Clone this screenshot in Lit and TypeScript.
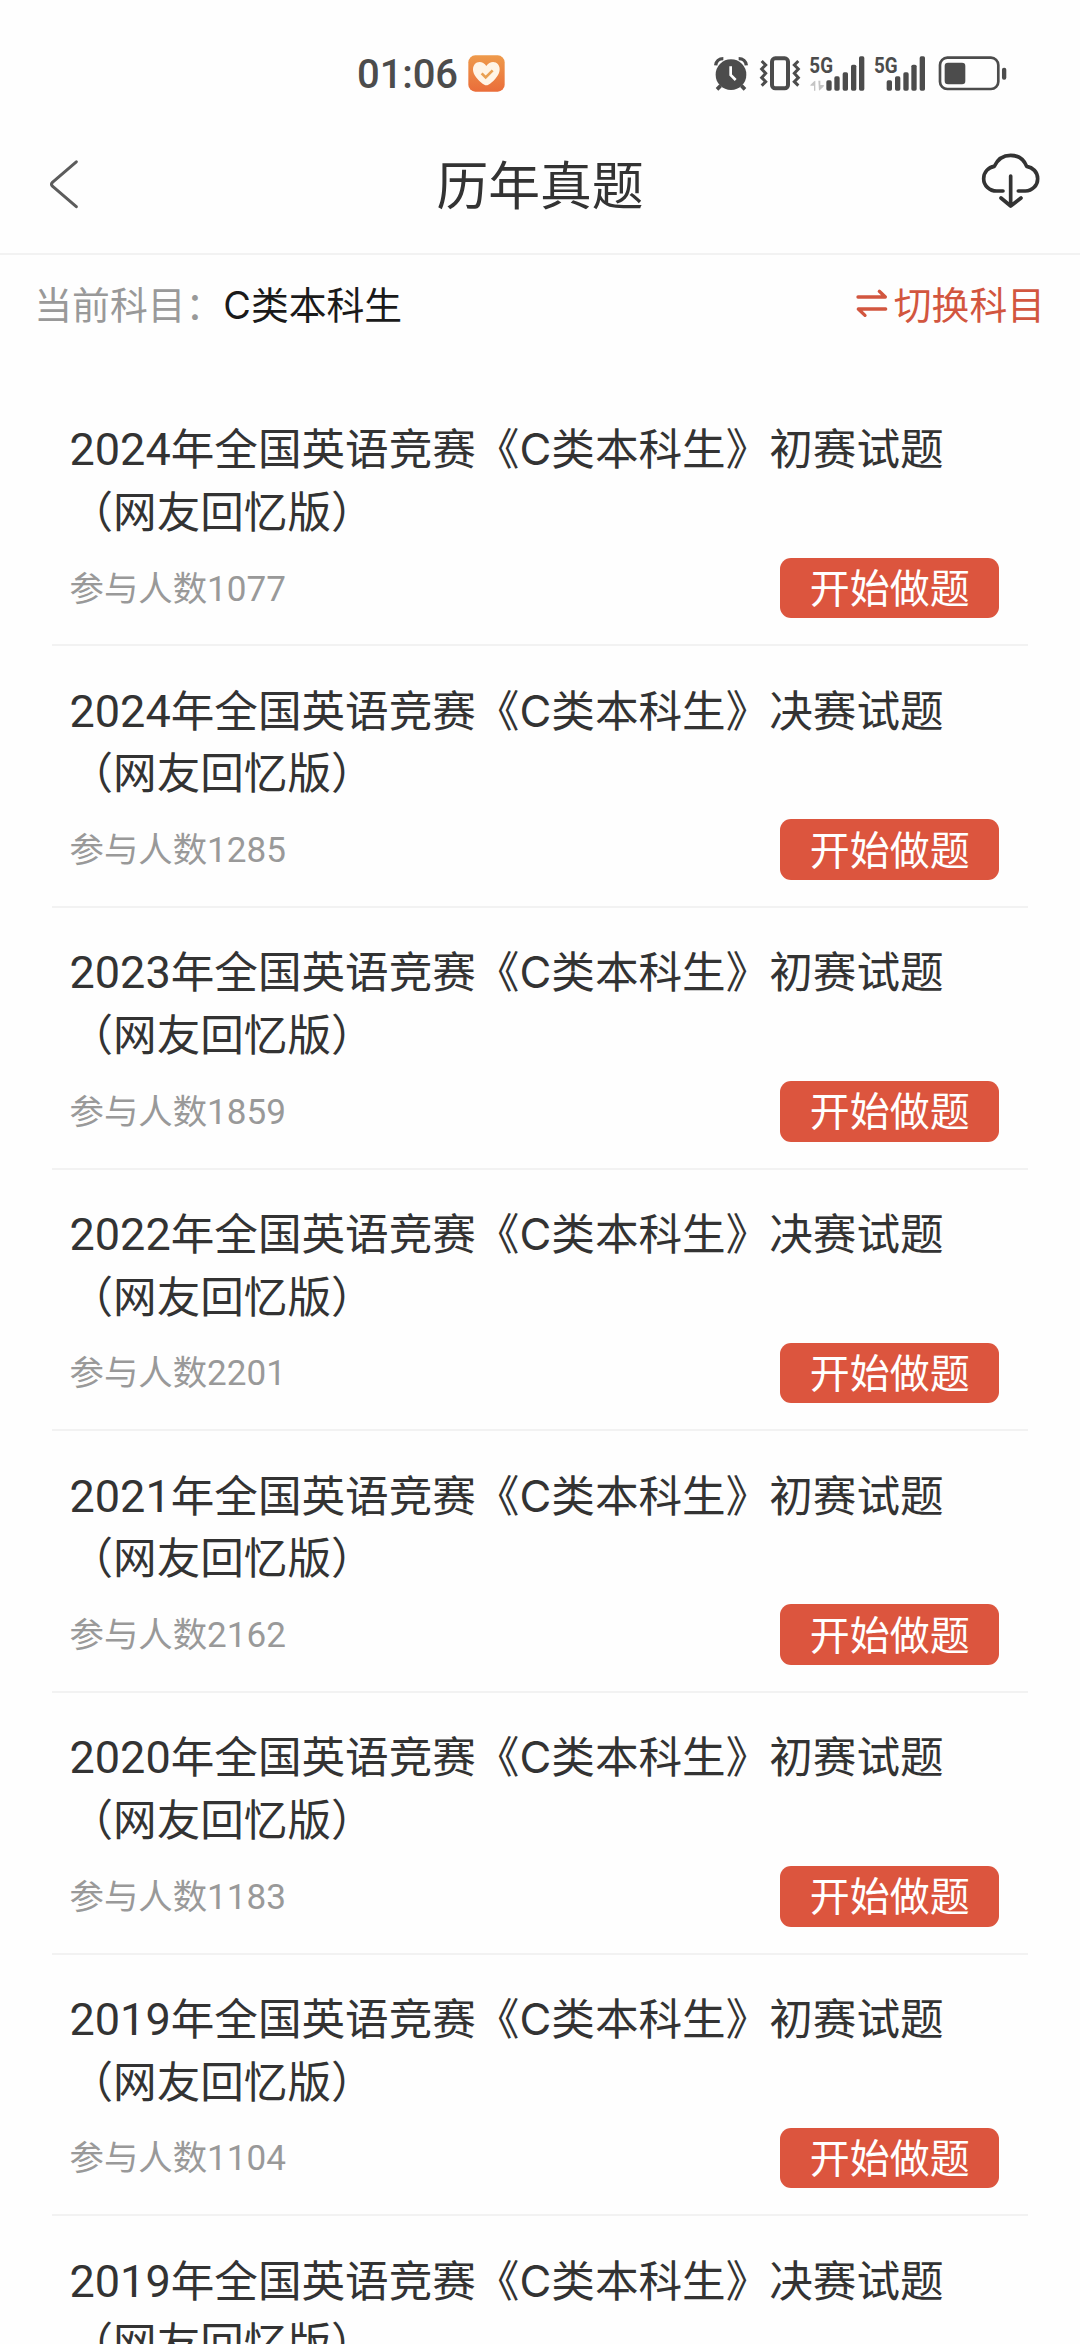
import { LitElement, html, css, nothing } from "lit";
import { customElement, property } from "lit/decorators.js";

interface Paper {
  year: string;
  stage: string;
  count?: number;
}

const PAPERS: Paper[] = [
  { year: "2024", stage: "初赛", count: 1077 },
  { year: "2024", stage: "决赛", count: 1285 },
  { year: "2023", stage: "初赛", count: 1859 },
  { year: "2022", stage: "决赛", count: 2201 },
  { year: "2021", stage: "初赛", count: 2162 },
  { year: "2020", stage: "初赛", count: 1183 },
  { year: "2019", stage: "初赛", count: 1104 },
  { year: "2019", stage: "决赛" },
];

@customElement("status-bar")
class StatusBar extends LitElement {
  static styles = css`
    :host {
      display: flex;
      align-items: center;
      justify-content: space-between;
      box-sizing: border-box;
      height: 118px;
      padding: 28.4px 72.7px 0 357px;
      color: #4c4c4c;
    }
    .left, .right { display: flex; align-items: center; }
    .left { gap: 10px; }
    .time {
      font: 500 40px/46px Roboto, sans-serif;
      letter-spacing: -0.1px;
      width: 101px;
      padding-top: 3px;
      white-space: nowrap;
    }
    svg { display: block; height: 37px; flex: none; }
    .heart { width: 37px; }
    .alarm { width: 36px; margin-right: 10px; }
    .vibrate { width: 42px; margin-right: 8px; }
    .signal-a { width: 56px; margin-right: 9.3px; }
    .signal-b { width: 52px; margin-right: 12px; }
    .battery { width: 69.3px; }
    .net { font: 700 66px Roboto, sans-serif; }
  `;
  render() {
    return html`
      <div class="left">
        <span class="time">01:06</span>
        <svg class="heart" viewBox="0 0 111 111">
          <defs>
            <linearGradient id="g" x1="0" y1="0" x2="0" y2="1">
              <stop offset="0" stop-color="#ee9a4b" /><stop offset="1" stop-color="#ea6d3a" />
            </linearGradient>
          </defs>
          <rect x="1" y="1" width="109" height="109" rx="21" fill="url(#g)" />
          <path d="M55 33C46 19 29 17 20 28c-10 13-4 31 8 43 7 8 14 14 21 18q6 4 12 0c7-4 14-10 21-18 12-12 18-30 8-43-9-11-26-9-35 5z" fill="#fff4e6" />
          <path d="M41 55l12 12 21-21" fill="none" stroke="#e9a052" stroke-width="8" />
        </svg>
      </div>
      <div class="right">
        <svg class="alarm" viewBox="38 44 108 111" fill="none" stroke="currentColor">
          <circle cx="92" cy="103" r="46" fill="currentColor" stroke="none" />
          <path d="M61 136l-11 11M123 136l11 11" stroke-width="11" />
          <path d="M46 75c1-12 10-20 23-20M138 75c-1-12-10-20-23-20" stroke-width="10" />
          <path d="M91 78v26l15 15" stroke="#fff" stroke-width="8" />
        </svg>
        <svg class="vibrate" viewBox="176 44 126 111" fill="none" stroke="currentColor">
          <rect x="215" y="54" width="48" height="90" rx="10" stroke-width="12" />
          <path d="M184 62l12 12-12 12 12 13-12 13 12 12-12 12M294 62l-12 12 12 12-12 13 12 13-12 12 12 12" stroke-width="9" />
        </svg>
        <svg class="signal-a" viewBox="326 44 168 111" fill="currentColor">
          <text class="net" x="327" y="98" textLength="71" lengthAdjust="spacingAndGlyphs">5G</text>
          <path d="M343 121v13h-13zM345 121v30h-4v-15h-12zM358 150v-12h13zM354 121h6v13h12l-16 17z" fill="#c4c4c4" />
          <rect x="378" y="120" width="16" height="31" rx="5" />
          <rect x="402" y="108" width="16" height="43" rx="5" />
          <rect x="427" y="96" width="16" height="55" rx="5" />
          <rect x="452" y="73" width="16" height="78" rx="5" />
          <rect x="476" y="48" width="16" height="103" rx="5" />
        </svg>
        <svg class="signal-b" viewBox="522 44 156 111" fill="currentColor">
          <text class="net" x="522" y="98" textLength="71" lengthAdjust="spacingAndGlyphs">5G</text>
          <rect x="560" y="120" width="16" height="31" rx="5" />
          <rect x="585" y="108" width="16" height="43" rx="5" />
          <rect x="610" y="96" width="16" height="55" rx="5" />
          <rect x="634" y="73" width="16" height="78" rx="5" />
          <rect x="659" y="48" width="16" height="103" rx="5" />
        </svg>
        <svg class="battery" viewBox="714 44 208 111" fill="currentColor">
          <rect x="720" y="52" width="175" height="94" rx="22" fill="none" stroke="currentColor" stroke-width="8" />
          <rect x="734" y="67" width="62" height="65" rx="10" />
          <rect x="906" y="82" width="13" height="36" rx="6" />
        </svg>
      </div>
    `;
  }
}

@customElement("nav-header")
class NavHeader extends LitElement {
  static styles = css`
    :host {
      display: grid;
      grid-template-columns: 1fr auto 1fr;
      align-items: center;
      height: 135px;
      padding: 0 40px;
      border-bottom: 2px solid #f2f2f2;
      color: #333;
    }
    .title { font-size: 51.8px; line-height: 62px; font-weight: 400; margin: 0 0 6px 0; }
    .back { width: 30px; height: 50px; margin: 0 0 1px 9px; }
    .cloud { width: 60px; height: 56px; justify-self: end; margin-bottom: 11px; }
    svg { display: block; }
  `;
  render() {
    return html`
      <svg class="back" viewBox="0 0 30 50" fill="none" stroke="#5c5c5c" stroke-width="3" stroke-linecap="round" stroke-linejoin="round">
        <path d="M27.3 1.8L3.4 22.4Q1.6 24.3 3.4 26.2L27.3 46.7" />
      </svg>
      <h1 class="title">历年真题</h1>
      <svg class="cloud" viewBox="0 0 180 168" fill="none" stroke="currentColor" stroke-width="11" stroke-linecap="round" stroke-linejoin="round">
        <path d="M69 117H50C28 117 11 100 11 80c0-20 14-34 32-37C53 21 70 10 92 10s39 11 48 33c18 3 33 17 33 37 0 20-16 37-37 37h-21" />
        <path d="M92 72v89M63 138l29 24 31-24" />
      </svg>
    `;
  }
}

@customElement("subject-bar")
class SubjectBar extends LitElement {
  static styles = css`
    :host {
      display: flex;
      align-items: center;
      justify-content: space-between;
      height: 96px;
      padding: 0 35px 0 34.3px;
      margin-bottom: 33.6px;
      font-size: 37.8px;
      line-height: 56px;
    }
    .label { color: #999; }
    .value { color: #1a1a1a; }
    .latin { font-family: Inter, sans-serif; line-height: 1; }
    .switch { display: flex; align-items: center; gap: 6px; color: #d2563f; }
    .swap { display: block; width: 32px; height: 30px; }
  `;
  render() {
    return html`
      <div><span class="label">当前科目：</span><span class="value"><span class="latin">C</span>类本科生</span></div>
      <div class="switch">
        <svg class="swap" viewBox="0 0 96 90" fill="none" stroke="currentColor" stroke-width="10" stroke-linecap="round" stroke-linejoin="round">
          <path d="M6 27H88L70 10M89 63H7L27 82" />
        </svg>
        <span>切换科目</span>
      </div>
    `;
  }
}

@customElement("paper-item")
class PaperItem extends LitElement {
  @property({ attribute: false }) paper!: Paper;
  static styles = css`
    :host {
      display: block;
      box-sizing: border-box;
      height: 261.67px;
      padding: 30.5px 28.7px 0 17.5px;
      border-bottom: 2px solid #f2f2f2;
    }
    .name { font-size: 43.6px; line-height: 62.7px; color: #333; white-space: nowrap; }
    .line { height: 62.7px; }
    .num { font-family: Roboto, sans-serif; font-size: 1.033em; line-height: 1; }
    .latin { font-family: Inter, sans-serif; line-height: 1; }
    .row { display: flex; align-items: center; justify-content: space-between; margin-top: 17.2px; }
    .count { font-size: 34.4px; line-height: 50px; color: #999; padding-bottom: 5px; }
    .count .num { font-size: 1.02em; }
    .start {
      width: 219px;
      height: 60.7px;
      box-sizing: border-box;
      padding: 0 0 4px 0;
      border: 0;
      border-radius: 11px;
      background: #dc553e;
      color: #fff;
      font: inherit;
      font-size: 40px;
      line-height: 56px;
    }
  `;
  render() {
    const { year, stage, count } = this.paper;
    return html`
      <div class="name">
        <div class="line"><span class="num">${year}</span>年全国英语竞赛《<span class="latin">C</span>类本科生》${stage}试题</div>
        <div class="line">（网友回忆版）</div>
      </div>
      ${count === undefined
        ? nothing
        : html`<div class="row">
            <div class="count">参与人数<span class="num">${count}</span></div>
            <button class="start">开始做题</button>
          </div>`}
    `;
  }
}

@customElement("app-root")
class AppRoot extends LitElement {
  static styles = css`
    :host {
      display: block;
      width: 1080px;
      height: 2344px;
      overflow: hidden;
      background: #fefefe;
      font-family: "Noto Sans CJK SC", sans-serif;
    }
    .list { padding: 0 52px; }
  `;
  render() {
    return html`
      <status-bar></status-bar>
      <nav-header></nav-header>
      <subject-bar></subject-bar>
      <main class="list">${PAPERS.map((p) => html`<paper-item .paper=${p}></paper-item>`)}</main>
    `;
  }
}
